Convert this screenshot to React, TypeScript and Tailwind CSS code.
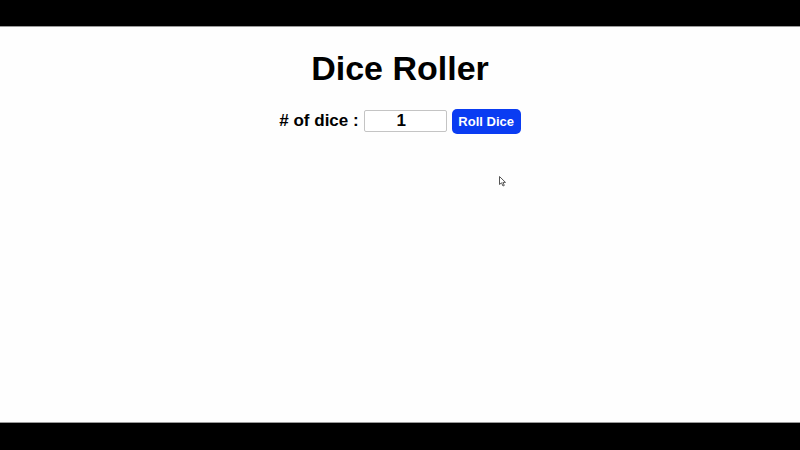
import { useState } from 'react'

function Cursor() {
  return (
    <svg width="8" height="11" viewBox="0 0 8 11" className="absolute left-[499px] top-[176px]">
      <path d="M0.5 0.5 L0.5 8.5 L2.5 6.8 L4 10 L5.3 9.4 L3.9 6.4 L6.5 6.4 Z" fill="#fff" stroke="#555" strokeWidth="1" />
    </svg>
  )
}

export default function App() {
  const [count, setCount] = useState('1')

  return (
    <div className="relative flex h-[450px] w-[800px] flex-col overflow-hidden bg-black font-['Liberation_Sans',Arial,sans-serif]">
      <div className="h-[27px] shrink-0 border-b border-[#9a9a9a] bg-black" />

      <main className="flex flex-1 flex-col items-center bg-[#fefefe] text-black">
        <h1 className="mt-[21px] text-[34px] font-bold leading-[40px]">Dice Roller</h1>

        <div className="mt-[20px] flex items-baseline gap-[5px]">
          <label htmlFor="dice" className="text-[17px] font-bold">
            # of dice :
          </label>
          <input
            id="dice"
            type="text"
            value={count}
            onChange={e => setCount(e.target.value)}
            className="h-[22px] w-[83px] rounded-[2px] border border-[#c4c4c4] bg-white pr-2 text-center text-[17px] font-bold outline-none"
          />
          <button className="h-[25px] w-[69px] rounded-[5px] bg-[#0a3cf2] text-[13px] font-bold text-white">
            Roll Dice
          </button>
        </div>
      </main>

      <div className="h-[28px] shrink-0 border-t border-[#9a9a9a] bg-black" />
      <Cursor />
    </div>
  )
}
